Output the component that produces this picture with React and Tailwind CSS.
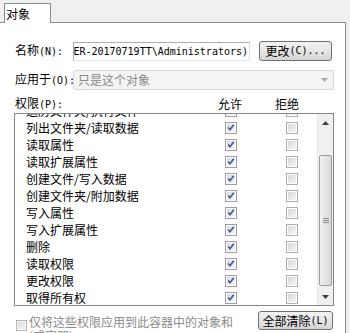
import React from 'react';

const rows = [
  '遍历文件夹/执行文件',
  '列出文件夹/读取数据',
  '读取属性',
  '读取扩展属性',
  '创建文件/写入数据',
  '创建文件夹/附加数据',
  '写入属性',
  '写入扩展属性',
  '删除',
  '读取权限',
  '更改权限',
  '取得所有权',
];

// latin bits of the labels, narrow like the dialog font
function Latin({ children }) {
  return (
    <span className="font-['DejaVu_Sans_Mono',monospace] text-[10px]">{children}</span>
  );
}

function CheckedBox() {
  return (
    <svg width="12" height="12" viewBox="0 0 12 12">
      <defs>
        <linearGradient id="ck" x1="0" y1="0" x2="1" y2="1">
          <stop offset="0" stopColor="#d6dbe6" />
          <stop offset="1" stopColor="#f4f5f8" />
        </linearGradient>
      </defs>
      <rect x="0.5" y="0.5" width="11" height="11" fill="#fff" stroke="#9c9ea3" />
      <rect x="2" y="2" width="8" height="8" fill="url(#ck)" />
      <path d="M3.2 5.6 L5 7.8 L8.8 2.8" fill="none" stroke="#475a8a" strokeWidth="1.6" />
    </svg>
  );
}

function EmptyBox({ size = 12 }) {
  return (
    <svg width={size} height={size} viewBox="0 0 12 12">
      <defs>
        <linearGradient id="ek" x1="0" y1="0" x2="1" y2="1">
          <stop offset="0" stopColor="#d8d8d8" />
          <stop offset="1" stopColor="#f6f6f6" />
        </linearGradient>
      </defs>
      <rect x="0.5" y="0.5" width="11" height="11" fill="#fff" stroke="#aeaeae" />
      <rect x="2" y="2" width="8" height="8" fill="url(#ek)" />
    </svg>
  );
}

function ScrollBar() {
  return (
    <div className="w-[16px] h-full flex flex-col bg-[#f0f0f0] border-l border-[#e8e8e8]">
      <div className="h-[17px] flex items-center justify-center">
        <svg width="7" height="4" viewBox="0 0 7 4">
          <path d="M0 4 L3.5 0 L7 4 Z" fill="#3f3f3f" />
        </svg>
      </div>
      <div className="flex-1 px-px">
        <div className="mt-[24px] h-[131px] rounded-[2px] border border-[#9b9b9b] bg-gradient-to-r from-[#f1f1f1] to-[#d9d9d9] flex items-center justify-center">
          <div className="flex flex-col gap-[1px]">
            <div className="w-[6px] h-px bg-[#8c8c8c]" />
            <div className="w-[6px] h-px bg-[#8c8c8c]" />
            <div className="w-[6px] h-px bg-[#8c8c8c]" />
          </div>
        </div>
      </div>
      <div className="h-[17px] flex items-center justify-center">
        <svg width="7" height="4" viewBox="0 0 7 4">
          <path d="M0 0 L3.5 4 L7 0 Z" fill="#3f3f3f" />
        </svg>
      </div>
    </div>
  );
}

export default function App() {
  return (
    <div className="w-[350px] h-[333px] bg-[#f0f0f0] overflow-hidden text-[12px] text-black font-['Noto_Sans_CJK_SC',sans-serif]">
      {/* tab strip */}
      <div className="h-[23px] flex items-start">
        <div className="relative z-10 ml-[4px] mt-[3px] w-[47px] h-[20px] bg-white border-l border-t border-r border-[#898c95] pl-[1px] pt-[2px] leading-[16px]">
          对象
        </div>
      </div>

      {/* page */}
      <div className="-mt-px w-[346px] h-[311px] bg-white border-t border-r border-[#898c95] pl-[14px] pr-[11px] overflow-hidden">
        <div className="pt-[18px] flex items-center h-[38px]">
          <div className="w-[59px] shrink-0 pl-px leading-[16px] whitespace-nowrap">
            名称<Latin>(N):</Latin>
          </div>
          <div className="w-[177px] h-[19px] border border-[#abadb3] border-r-[#dbdfe6] border-b-[#e3e9ef] flex justify-end items-center overflow-hidden pr-[1px]">
            <span className="whitespace-nowrap font-['DejaVu_Sans_Mono',monospace] text-[10px]">
              (USER-20170719TT\Administrators)
            </span>
          </div>
          <button className="ml-[9px] w-[73px] h-[20px] rounded-[3px] border border-[#707070] bg-gradient-to-b from-[#f2f2f2] via-[#e6e6e6] to-[#d4d4d4] flex items-center justify-center leading-[16px] whitespace-nowrap">
            更改<Latin>(C)...</Latin>
          </button>
        </div>

        <div className="mt-[9px] flex items-center h-[20px]">
          <div className="w-[59px] shrink-0 pl-px leading-[16px] whitespace-nowrap">
            应用于<Latin>(O):</Latin>
          </div>
          <div className="w-[261px] h-[20px] border border-[#d9d9d9] rounded-[2px] bg-[#f4f4f4] flex items-center pl-[4px] pr-[5px]">
            <span className="flex-1 text-[#8a8a8a]">只是这个对象</span>
            <svg width="7" height="4" viewBox="0 0 7 4">
              <path d="M0 0 L3.5 4 L7 0 Z" fill="#a9a9a9" />
            </svg>
          </div>
        </div>

        <div className="pt-[4px] flex h-[23px] items-center leading-[16px]">
          <div className="w-[204px] pl-px whitespace-nowrap">
            权限<Latin>(P):</Latin>
          </div>
          <div className="w-[24px]">允许</div>
          <div className="ml-[33px]">拒绝</div>
        </div>

        <div className="w-[320px] h-[193px] border border-[#828790] flex">
          <div className="flex-1 overflow-hidden">
            <div className="-mt-[12px]">
              {rows.map((r) => (
                <div key={r} className="h-[17px] flex items-center">
                  <div className="w-[210px] pl-[11px] leading-[17px] whitespace-nowrap">{r}</div>
                  <CheckedBox />
                  <div className="w-[49px]" />
                  <EmptyBox />
                </div>
              ))}
            </div>
          </div>
          <ScrollBar />
        </div>

        <div className="pt-[5px] flex items-start">
          <div className="ml-[2px] mt-[9px]">
            <EmptyBox size={11} />
          </div>
          <div className="ml-[2px] mt-[4px] leading-[14px] text-[#8a8a8a] whitespace-nowrap">
            仅将这些权限应用到此容器中的对象和
            <br />
            (或容器)<Latin>(I)</Latin>
          </div>
          <button className="ml-auto mr-[1px] w-[75px] h-[19px] rounded-[3px] border border-[#707070] bg-gradient-to-b from-[#f2f2f2] via-[#e6e6e6] to-[#d4d4d4] flex items-center justify-center leading-[16px] whitespace-nowrap">
            全部清除<Latin>(L)</Latin>
          </button>
        </div>
      </div>
    </div>
  );
}
